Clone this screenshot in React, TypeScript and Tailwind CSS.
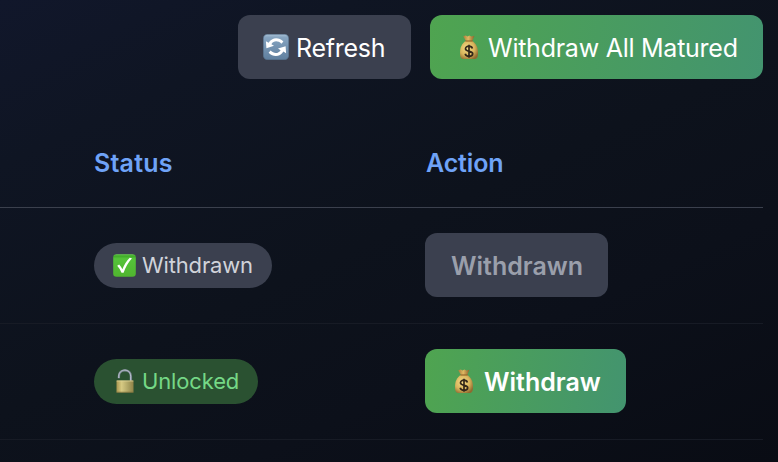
import type { ReactNode } from "react";

function RefreshIcon({ className }: { className: string }) {
  return (
    <svg viewBox="0 0 26 26" className={className} aria-hidden="true">
      <defs>
        <linearGradient id="refresh-tile" x1="0" y1="0" x2="0" y2="1">
          <stop offset="0" stopColor="#a9c1d6" />
          <stop offset="0.12" stopColor="#86a4c0" />
          <stop offset="1" stopColor="#5f7f9f" />
        </linearGradient>
      </defs>
      <rect x="0.3" y="0.3" width="25.4" height="25.4" rx="4.2" fill="url(#refresh-tile)" stroke="#56718c" strokeWidth="0.6" />
      <path d="M5.6 8.8C9 3.2 15.8 2.8 20.4 7.6L18.4 9.8C15 6.4 10.6 6.6 8.4 10.2L11 11.8 3.4 14.2 2.9 7.2Z" fill="#fff" />
      <path d="M20.4 17.6C17 23.2 10.2 23.6 5.6 18.8L7.6 16.6C11 20 15.4 19.8 17.6 16.2L15 14.6 22.6 12.2 23.1 19.2Z" fill="#fff" />
    </svg>
  );
}

function MoneyBagIcon({ className }: { className: string }) {
  return (
    <svg viewBox="0 0 20 25" className={className} aria-hidden="true">
      <defs>
        <radialGradient id="bag-body" cx="0.4" cy="0.4" r="0.68">
          <stop offset="0" stopColor="#f6dc86" />
          <stop offset="0.6" stopColor="#d9b45c" />
          <stop offset="1" stopColor="#8f6a30" />
        </radialGradient>
        <linearGradient id="bag-neck" x1="0" y1="0" x2="1" y2="0">
          <stop offset="0" stopColor="#a97a38" />
          <stop offset="0.45" stopColor="#e0b962" />
          <stop offset="1" stopColor="#8e602a" />
        </linearGradient>
      </defs>
      <path d="M4.2 1.2 6.8 0.6 8.6 1.4 10.4 0.6 12.4 1.4 15.4 0.8 13.2 6H7Z" fill="url(#bag-neck)" />
      <path d="M7 5.8C3 8.2 1 12.6 1 18 1 22.6 2.2 24 4.6 24H15.4C17.8 24 19 22.6 19 18 19 12.6 17 8.2 13 5.8Z" fill="url(#bag-body)" />
      <path d="M6.8 6H13.2" stroke="#8c5a23" strokeWidth="1.1" strokeLinecap="round" />
      <path d="M13.4 13.4C12.9 11.8 11.6 11.2 10 11.2 7.9 11.2 6.5 12.2 6.5 13.8 6.5 17.4 13.7 15.2 13.7 18.7 13.7 20.4 12.1 21.3 10 21.3 8 21.3 6.6 20.5 6.2 18.8M10 9.8V22.7" fill="none" stroke="#33271a" strokeWidth="1.7" />
    </svg>
  );
}

function CheckIcon({ className }: { className: string }) {
  return (
    <svg viewBox="0 0 23 23" className={className} aria-hidden="true">
      <defs>
        <linearGradient id="check-tile" x1="0" y1="0" x2="0" y2="1">
          <stop offset="0" stopColor="#6fd254" />
          <stop offset="0.08" stopColor="#3faa28" />
          <stop offset="0.2" stopColor="#55c33a" />
          <stop offset="1" stopColor="#50b52f" />
        </linearGradient>
      </defs>
      <rect x="0.2" y="0.2" width="22.6" height="22.6" rx="3.3" fill="url(#check-tile)" />
      <path d="M4.2 11.7 6.2 10.5C7.5 12 8.6 13.7 9.4 15.3 11.2 10.8 13.5 7 16.7 3.7L19 4.2C15.2 8.5 12.5 13.3 10.6 18.8H8.5C7.5 16.2 6.1 13.8 4.2 11.7Z" fill="#fff" />
    </svg>
  );
}

function UnlockedIcon({ className }: { className: string }) {
  return (
    <svg viewBox="0 0 18 24" className={className} aria-hidden="true">
      <defs>
        <linearGradient id="lock-body" x1="0" y1="0" x2="1" y2="0">
          <stop offset="0" stopColor="#a9954f" />
          <stop offset="0.3" stopColor="#d7ca83" />
          <stop offset="0.7" stopColor="#aca263" />
          <stop offset="1" stopColor="#918348" />
        </linearGradient>
      </defs>
      <path d="M2.9 9.2V7.2C2.9 3.4 5.6 1.4 8.9 1.4S14.9 3.4 14.9 7.2V12" fill="none" stroke="#7e8993" strokeWidth="2.3" />
      <path d="M2.7 9V7.2C2.7 3.6 5.6 1.1 8.9 1.1S14.6 3.6 14.6 7.2V12" fill="none" stroke="#b7bfce" strokeWidth="1" />
      <rect x="0.5" y="11.5" width="17" height="12" rx="0.6" fill="url(#lock-body)" />
      <path d="M0.6 12H17.4" stroke="#ded397" strokeWidth="0.8" />
      <path d="M0.6 23.2H17.4" stroke="#80703a" strokeWidth="0.7" />
    </svg>
  );
}

function Row({ status, action }: { status: ReactNode; action: ReactNode }) {
  return (
    <div className="grid h-[116px] grid-cols-[425px_1fr] border-b border-[#171b25] pt-[25px]">
      <div className="pt-2.5 pl-[94px]">{status}</div>
      <div>{action}</div>
    </div>
  );
}

const button = "flex h-16 items-center rounded-xl text-[25px] whitespace-nowrap";
const green = "bg-linear-[98deg,#4fa450,#43946f]";
const badge = "flex h-[45px] items-center rounded-full text-[22px]";

export default function App() {
  return (
    <main className="h-[462px] w-full overflow-hidden bg-linear-[155deg,#11172b_0%,#0f1523_20%,#0d121c_50%,#0c101a_70%,#090c14_100%] pt-[15px] pr-[15px] font-['Inter','Liberation_Sans',sans-serif]">
      <div className="flex justify-end gap-[19px]">
        <button className={`${button} w-[173px] bg-[#3b404f] pl-[25px] text-white`}>
          <RefreshIcon className="mr-[7px] h-[26px] w-[26px]" />
          <span className="pt-1 tracking-[-0.25px]">Refresh</span>
        </button>
        <button className={`${button} ${green} w-[333px] pl-[29px] text-white`}>
          <MoneyBagIcon className="mr-[9px] h-[25px] w-5" />
          <span className="pt-1 tracking-[-0.25px]">Withdraw All Matured</span>
        </button>
      </div>

      <div className="mt-[51px]">
        <div className="grid h-[78px] grid-cols-[425px_1fr] border-b border-[#3b404d] pt-[15px] text-[25px] leading-9 font-semibold text-[#6fa3f7]">
          <div className="pl-[94px] tracking-[0.2px]">Status</div>
          <div className="pl-px tracking-[-0.15px]">Action</div>
        </div>
        <Row
          status={
            <div className={`${badge} w-[178px] bg-[#3b404f] pl-[19px] text-[#d0d3da]`}>
              <CheckIcon className="mr-[6px] h-[23px] w-[23px]" />
              <span className="tracking-[-0.15px]">Withdrawn</span>
            </div>
          }
          action={
            <button disabled className={`${button} w-[183px] bg-[#3b404f] pl-[26px] font-semibold text-[#9a9fab]`}>
              <span className="pt-1">Withdrawn</span>
            </button>
          }
        />
        <Row
          status={
            <div className={`${badge} w-[164px] bg-[#2a5131] pl-[22px] text-[#75d886]`}>
              <UnlockedIcon className="-mt-0.5 mr-[8px] h-[24px] w-[18px]" />
              <span className="tracking-[-0.15px]">Unlocked</span>
            </div>
          }
          action={
            <button className={`${button} ${green} w-[201px] pl-[29px] font-semibold text-white`}>
              <MoneyBagIcon className="mr-[10px] h-[25px] w-5" />
              <span className="pt-1">Withdraw</span>
            </button>
          }
        />
      </div>
    </main>
  );
}
